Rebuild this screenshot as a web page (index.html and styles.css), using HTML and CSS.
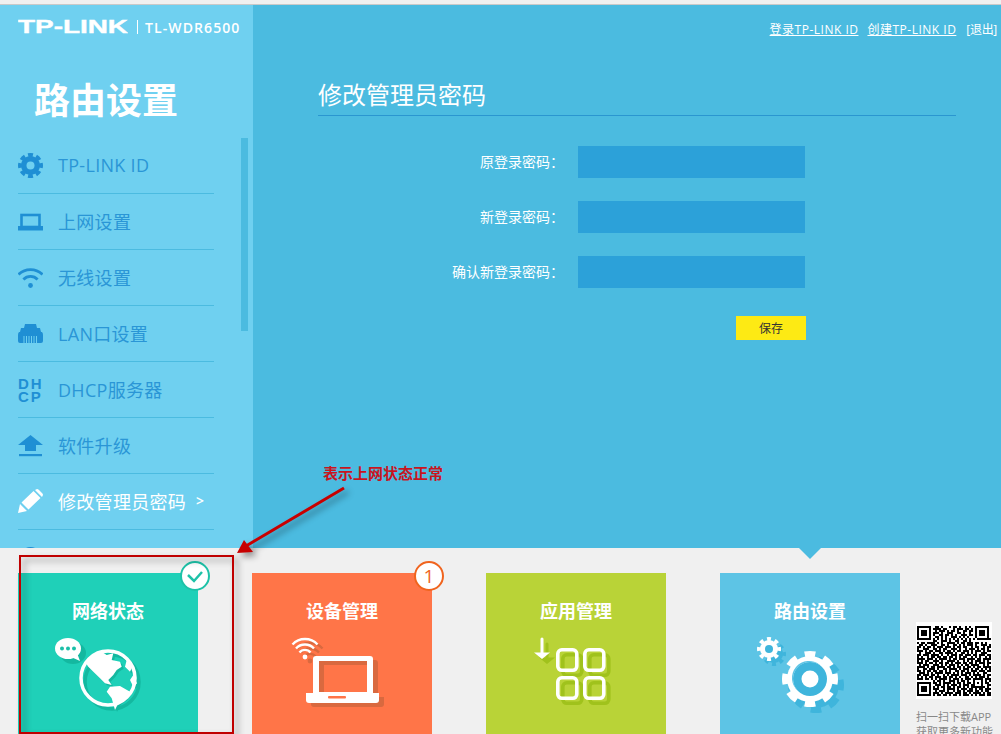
FILE: index.html
```html
<!DOCTYPE html>
<html lang="zh-CN">
<head>
    <meta charset="UTF-8">
    <meta name="viewport" content="width=device-width, initial-scale=1.0">
    <title>TL-WDR6500</title>
    <link rel="stylesheet" href="styles.css">
</head>
<body>
    <div class="app">
        <!-- Top Section -->
        <div class="top">
            <div class="sidebar">
                <div class="brand">
                    <svg class="brand-logo" width="110" height="20" viewBox="0 0 110 20"><text x="0" y="16" textLength="110" lengthAdjust="spacingAndGlyphs">TP-LINK</text></svg>
                    <span class="brand-sep"></span>
                    <span class="brand-model">TL-WDR6500</span>
                </div>
                <h1 class="side-title">路由设置</h1>
                <div class="scrollbar"></div>
                <ul class="nav">
                    <li class="nav-item">
                        <svg class="nav-icon" viewBox="0 0 25 25"><circle cx="12.5" cy="12.5" r="9.5" fill="#1f8fd4"/><circle cx="12.5" cy="12.5" r="10" fill="none" stroke="#1f8fd4" stroke-width="5" pathLength="80" stroke-dasharray="6 4" stroke-dashoffset="3"/><circle cx="12.5" cy="12.5" r="4" fill="#6fd0f0"/></svg>
                        <span>TP-LINK ID</span>
                    </li>
                    <li class="nav-item">
                        <svg class="nav-icon" viewBox="0 0 25 25"><rect x="3.5" y="6" width="18" height="12" fill="none" stroke="#1f8fd4" stroke-width="2.6"/><rect x="0" y="17" width="25" height="4.5" fill="#1f8fd4"/></svg>
                        <span>上网设置</span>
                    </li>
                    <li class="nav-item">
                        <svg class="nav-icon" viewBox="0 0 25 25"><path d="M.5 9.5a17 17 0 0 1 24 0M5.4 14.4a10 10 0 0 1 14.2 0" fill="none" stroke="#1f8fd4" stroke-width="2.8"/><circle cx="12.5" cy="20.5" r="2.4" fill="#1f8fd4"/></svg>
                        <span>无线设置</span>
                    </li>
                    <li class="nav-item">
                        <svg class="nav-icon" viewBox="0 0 25 25"><path d="M7 3h11l1 4h3l1 4h1q1 1 1 3v6q0 2-2 2H2q-2 0-2-2v-6q0-2 1-3h1l1-4h3z" fill="#1f8fd4"/><path d="M6 15v7M8.500 15v7M11 15v7M13.500 15v7M16 15v7M18.500 15v7" stroke="#6fd0f0" stroke-width="1"/></svg>
                        <span>LAN口设置</span>
                    </li>
                    <li class="nav-item">
                        <div class="nav-icon dhcp-icon">DH<br>CP</div>
                        <span>DHCP服务器</span>
                    </li>
                    <li class="nav-item">
                        <svg class="nav-icon" viewBox="0 0 25 25"><path d="M12.500 2 25 12h-7v6H7v-6H0z" fill="#1f8fd4"/><rect x="1" y="21" width="23" height="2.200" fill="#1f8fd4"/></svg>
                        <span>软件升级</span>
                    </li>
                    <li class="nav-item active">
                        <svg class="nav-icon" viewBox="0 0 25 25"><path d="M0 24l2-9 7 7zM3.500 13.500 15.500 2l7 7L10.500 20.500zM17 1l2-1q1 0 2 1l3 3q1 1 1 2l-1 2z" fill="#fff"/></svg>
                        <span>修改管理员密码</span>
                        <span class="nav-arrow">&gt;</span>
                    </li>
                    <li class="nav-item">
                        <svg class="nav-icon" viewBox="0 0 25 25"><circle cx="12.500" cy="12.500" r="9" fill="none" stroke="#1f8fd4" stroke-width="3"/></svg>
                    </li>
                </ul>
            </div>

            <div class="main">
                <div class="user-links">
                    <a>登录TP-LINK ID</a>
                    <a>创建TP-LINK ID</a>
                    <span>[退出]</span>
                </div>
                <h2 class="page-title">修改管理员密码</h2>
                <div class="form">
                    <div class="form-row"><label>原登录密码<span class="colon">：</span></label><div class="field"></div></div>
                    <div class="form-row"><label>新登录密码<span class="colon">：</span></label><div class="field"></div></div>
                    <div class="form-row"><label>确认新登录密码<span class="colon">：</span></label><div class="field"></div></div>
                </div>
                <button class="save-btn">保存</button>
            </div>
        </div>

        <!-- Bottom Section -->
        <div class="bottom">
            <div class="tile tile-green">
                <div class="badge badge-green">
                    <svg width="18" height="14" viewBox="0 0 18 14"><path d="M2 6l6 6 8-9" fill="none" stroke="#1ec2a8" stroke-width="2.500"/></svg>
                </div>
                <h3>网络状态</h3>
                <svg class="tile-icon" viewBox="0 0 180 110">
                    <defs>
                        <circle id="globe-ring" cx="90" cy="45" r="27" fill="none" stroke="currentColor" stroke-width="3.500"/>
                        <path id="globe-land" d="M67 28.700 73.700 22l8.300-4.300 6.700 4.300 6.600-1.700-1.600 6.700 8.300 1.700 1.700 5-5 3.300-3.400 5-5 5 3.400 5-6.700-1.700-5-5-6.700-6.600-5-5zM92 53.700l10-.7 10 5.700-5 6.600-6.700 5-3.300 6.700-3.300-11.700-5-6.600zM108.700 27l6.600 5-3.300 6.700-5-5zM115.300 42l3.700 8.300-3.700 3.400-3.300-6.700z" fill="currentColor"/>
                    </defs>
                    <ellipse cx="55" cy="20" rx="13" ry="11" fill="#14b8a0"/>
                    <use href="#globe-ring" x="4" y="4" class="shade-green"/>
                    <use href="#globe-land" x="2" y="2" class="shade-green"/>
                    <use href="#globe-ring" class="white"/>
                    <use href="#globe-land" class="white"/>
                    <ellipse cx="50" cy="15.500" rx="13" ry="10.500" fill="#fff"/>
                    <path d="M53 24l9 4-3-8z" fill="#fff"/>
                    <circle cx="44" cy="15.500" r="2" fill="#1bbfa8"/>
                    <circle cx="50" cy="15.500" r="2" fill="#1bbfa8"/>
                    <circle cx="56" cy="15.500" r="2" fill="#1bbfa8"/>
                </svg>
            </div>

            <div class="tile tile-orange">
                <div class="badge badge-orange">1</div>
                <h3>设备管理</h3>
                <svg class="tile-icon" viewBox="0 0 180 110">
                    <defs>
                        <g id="laptop">
                            <path d="M64 23h54q3 0 3 3v34h-60V26q0-3 3-3zm3 5v31h48V28z" fill="currentColor" fill-rule="evenodd"/>
                            <path d="M54 60h73v7q0 3-3 3H57q-3 0-3-3z" fill="currentColor"/>
                        </g>
                        <g id="wifi">
                            <path d="M40.500 11.500a17 17 0 0 1 25 0M44 15.500a12 12 0 0 1 18 0M47.500 19.500a7 7 0 0 1 11 0" fill="none" stroke="currentColor" stroke-width="2.400"/>
                            <circle cx="53" cy="24" r="2.400" fill="currentColor"/>
                        </g>
                    </defs>
                    <use href="#wifi" x="5" y="4" class="shade-orange"/>
                    <use href="#laptop" x="5" y="4" class="shade-orange"/>
                    <use href="#wifi" class="white"/>
                    <use href="#laptop" class="white"/>
                    <rect x="76" y="63" width="18" height="2.500" rx="1" fill="#ff7548"/>
                </svg>
            </div>

            <div class="tile tile-lime">
                <h3>应用管理</h3>
                <svg class="tile-icon" viewBox="0 0 180 110">
                    <defs>
                        <g id="apps">
                            <g fill="none" stroke="currentColor" stroke-width="3.600">
                                <rect x="71.800" y="16.800" width="19" height="20.500" rx="4"/>
                                <rect x="98.800" y="16.800" width="19" height="20.500" rx="4"/>
                                <rect x="71.800" y="44.800" width="19" height="20.500" rx="4"/>
                                <rect x="98.800" y="44.800" width="19" height="20.500" rx="4"/>
                            </g>
                            <path d="M54.500 6a1.500 1.500 0 0 1 3 0v13.500H64L56 26l-8-6.500h6.500z" fill="currentColor"/>
                        </g>
                    </defs>
                    <use href="#apps" x="5" y="5" class="shade-lime"/>
                    <use href="#apps" class="white"/>
                </svg>
            </div>

            <div class="tile tile-blue">
                <h3>路由设置</h3>
                <svg class="tile-icon" viewBox="0 0 180 110">
                    <defs>
                        <g id="gear-big">
                            <circle cx="90" cy="46" r="23" fill="currentColor"/>
                            <circle cx="90" cy="46" r="24.500" fill="none" stroke="currentColor" stroke-width="7" pathLength="80" stroke-dasharray="5.500 4.500" stroke-dashoffset="2.750"/>
                        </g>
                        <g id="gear-small">
                            <circle cx="49" cy="16" r="9" fill="currentColor"/>
                            <circle cx="49" cy="16" r="10" fill="none" stroke="currentColor" stroke-width="4" pathLength="80" stroke-dasharray="5 5" stroke-dashoffset="2.500"/>
                        </g>
                    </defs>
                    <use href="#gear-small" x="5" y="5" class="shade-blue"/>
                    <use href="#gear-big" x="6" y="6" class="shade-blue"/>
                    <use href="#gear-small" class="white"/>
                    <circle cx="49" cy="16" r="4" fill="#3fb5dc"/>
                    <use href="#gear-big" class="white"/>
                    <circle cx="90" cy="46" r="17" fill="#3fb5dc"/>
                    <path d="M90 29a17 17 0 0 0-12 29 17 17 0 0 1 22-26q-5-3-10-3z" fill="#5dc4e5"/>
                    <circle cx="90" cy="46" r="8.500" fill="#fff"/>
                </svg>
            </div>

            <div class="app-promo">
                <div class="qr"><svg id="qr-code" width="74" height="74" viewBox="0 0 37 37" shape-rendering="crispEdges"></svg></div>
                <p>扫一扫下载APP<br>获取更多新功能</p>
            </div>
        </div>

        <!-- Annotation -->
        <svg class="note-layer" width="1001" height="734" viewBox="0 0 1001 734">
            <g class="note-shadow">
                <rect x="20" y="556" width="213" height="177" fill="none" stroke="#c00000" stroke-width="2"/>
                <path d="M344 488 246 546" stroke="#c80000" stroke-width="3" fill="none"/>
                <path d="M237 553 244 540 253 552z" fill="#c80000"/>
            </g>
        </svg>
        <div class="note-text">表示上网状态正常</div>
    </div>
    <script src="qr.js"></script>
</body>
</html>
```

FILE: styles.css
```css
/* General Styling */
* {
    margin: 0;
    padding: 0;
    box-sizing: border-box;
    font-family: "Open Sans", "Noto Sans CJK SC", sans-serif;
}

html, body {
    height: 100%;
    overflow: hidden;
}

body {
    background-color: #f0f0f0;
}

.app {
    position: relative;
    height: 734px;
    padding-top: 4px;
    overflow: hidden;
}

.top {
    display: flex;
    height: 544px;
    border-top: 1px solid #c9c9c9;
}

/* Left Section */
.sidebar {
    position: relative;
    width: 253px;
    padding: 12px 0 0 18px;
    background-color: #6fd0f0;
    overflow: hidden;
}

.brand {
    display: flex;
    align-items: center;
    height: 20px;
    color: #fff;
}

.brand-logo text {
    font-family: "Liberation Sans", sans-serif;
    font-size: 18px;
    font-weight: 700;
    fill: #fff;
    stroke: #fff;
    stroke-width: 0.4;
}

.brand-sep {
    width: 1px;
    height: 14px;
    margin: 0 7px 0 9px;
    background-color: #fff;
}

.brand-model {
    font-size: 14px;
    font-weight: 600;
    letter-spacing: 1.1px;
    white-space: nowrap;
}

.side-title {
    height: 50px;
    margin-top: 39px;
    margin-bottom: -1px;
    padding-left: 16px;
    color: #fff;
    font-size: 36px;
    font-weight: 700;
    line-height: 50px;
}

.scrollbar {
    position: absolute;
    top: 133px;
    left: 241px;
    width: 7px;
    height: 193px;
    background-color: #4bbbe0;
}

.nav {
    width: 196px;
    margin-top: 13px;
    list-style: none;
}

.nav-item {
    display: flex;
    align-items: center;
    gap: 15px;
    height: 56px;
    border-bottom: 1px solid #4bbbe0;
    color: #2a96d6;
    font-size: 18px;
    letter-spacing: 0.3px;
    white-space: nowrap;
}

.nav-item span {
    margin-top: -2px;
}

.nav-item.active {
    color: #fff;
}

.nav-icon {
    flex: none;
    width: 25px;
    height: 25px;
}

.dhcp-icon {
    color: #1f8fd4;
    font-family: "Liberation Sans", sans-serif;
    font-size: 15px;
    font-weight: 700;
    letter-spacing: 2px;
    line-height: 13px;
}

.nav-item .nav-arrow {
    margin-left: -5px;
    font-size: 14px;
    font-weight: 600;
}

/* Right Section */
.main {
    flex: 1;
    padding: 15px 45px 0 65px;
    background-color: #4bbbe0;
    color: #fff;
}

.user-links {
    display: flex;
    justify-content: flex-end;
    gap: 9px;
    margin-right: -41px;
    font-size: 12px;
    line-height: 20px;
    white-space: nowrap;
}

.user-links a {
    letter-spacing: 0.5px;
    text-decoration: underline;
}

.user-links span {
    margin-left: 1px;
    letter-spacing: -0.3px;
}

.page-title {
    height: 41px;
    margin-top: 35px;
    border-bottom: 1px solid #2a96d0;
    font-size: 24px;
    font-weight: 400;
    line-height: 40px;
}

.form {
    display: flex;
    flex-direction: column;
    gap: 23px;
    margin-top: 30px;
}

.form-row {
    display: flex;
    align-items: center;
    gap: 14px;
}

.form-row label {
    width: 246px;
    padding-bottom: 3px;
    font-size: 14px;
    text-align: right;
}

/* TC font keeps the full-width colon centred in its box */
.colon {
    font-family: "Noto Sans CJK TC", sans-serif;
}

.field {
    width: 227px;
    height: 32px;
    background-color: #2ca1d9;
}

.save-btn {
    display: block;
    width: 70px;
    height: 24px;
    margin: 28px 0 0 418px;
    border: none;
    background-color: #fdea14;
    color: #333;
    font-size: 12px;
}

/* Bottom Section */
.bottom {
    display: flex;
    gap: 54px;
    height: 186px;
    padding: 25px 0 0 18px;
}

.tile {
    position: relative;
    flex: none;
    width: 180px;
    height: 186px;
    padding-top: 27px;
    color: #fff;
    text-align: center;
}

.tile h3 {
    font-size: 18px;
    font-weight: 700;
    line-height: 22px;
}

.tile-icon {
    display: block;
    width: 180px;
    height: 110px;
    margin-top: 11px;
    overflow: visible;
}

.tile-green { background-color: #1fd0b8; }
.tile-orange { background-color: #ff7548; }
.tile-lime { background-color: #b9d337; }
.tile-blue { background-color: #5dc4e5; }

/* little notch below the main panel */
.tile-blue::before {
    content: "";
    position: absolute;
    top: -25px;
    left: 79px;
    border-top: 11px solid #4bbbe0;
    border-left: 11px solid transparent;
    border-right: 11px solid transparent;
}

.white { color: #fff; }
.shade-green { color: #14b8a0; }
.shade-orange { color: #d9693f; }
.shade-lime { color: #a0c21c; }
.shade-blue { color: #3fb5dc; }

.badge {
    position: absolute;
    top: -12px;
    right: -12px;
    display: flex;
    align-items: center;
    justify-content: center;
    width: 30px;
    height: 30px;
    border-radius: 50%;
    background-color: #fff;
}

.badge-green {
    border: 2.5px solid #1ec2a8;
}

.badge-orange {
    border: 2.5px solid #f0641e;
    color: #f0641e;
    font-size: 19px;
}

.app-promo {
    flex: none;
    margin: 49px 0 0 -38px;
    width: 85px;
}

.qr {
    display: flex;
    align-items: center;
    justify-content: center;
    width: 76px;
    height: 77px;
    background-color: #fff;
}

.app-promo p {
    margin-top: 10px;
    color: #888;
    font-size: 11px;
    line-height: 15px;
    white-space: nowrap;
}

/* Annotation */
.note-layer {
    position: absolute;
    top: 0;
    left: 0;
    pointer-events: none;
}

.note-shadow {
    filter: drop-shadow(4px 4px 3px rgba(0, 0, 0, 0.4));
}

.note-text {
    position: absolute;
    top: 463px;
    left: 323px;
    color: #c8141e;
    font-size: 15px;
    font-weight: 700;
    line-height: 20px;
}
```

FILE: qr.js
```js
// QR pattern, one string per row
const rows = [
    "#######..##.#...#.##.#..#.#..#######",
    "#.....#.####.##...#.###.##.#.#.....#",
    "#.###.#..#.###.#.##.#..##.##.#.###.#",
    "#.###.#.###.#..###..##.#..#..#.###.#",
    "#.###.#.#..##.##.#.#..###.##.#.###.#",
    "#.....#..##.#.#..###.#.#.#...#.....#",
    "#######.#.#.#.#.#.#.#.#.#.#.#.#######",
    "........##..###.#..##..##.#..........",
    "#.##.####.#.#..####.#.##.###.##.#.#..",
    ".##.#..###..##.#..##.#.#.###.#..###.#",
    "##.#.##.#.###.###.#.##.##..#.##..#.##",
    "#..###..##.#.##..###.#..#.###.#.##.#.",
    "###.#.##.###.#.##.#.##.###.#.###.#.##",
    ".#..###.#..##.####.#..##.#.#.#..###..",
    "##.###.####.#..#.###.##.###.##.###.##",
    "#.#..#.##.##.##.##.#.#.##..#.#.#..#.#",
    "####.###.#.####.#.##.###.####.##.####",
    "#.#.##..###.#..####.#..#.#.#.###.#.#.",
    "###.#.##.#.##.##.#.###.##.##.#.###.##",
    ".#.###..###.#.#.###.#.#.##.####..#.#.",
    "####.#.##.####.##.#.##.#.##.#.##.####",
    "#..##.###.#..##.####.#.###.#.##.#.#.#",
    "##.#.##.##.##.#.#..##.##.#.###.###.##",
    ".###.#.#.####.###.#.#.#.###.#.#..##..",
    "##.###.##.#..#.#.####.###.#.####.#.##",
    "#.#.#.##.###.##.##.#.#..##.#.#.###.#.",
    "###.##.#.#.####.#.###.#.###.#####.###",
    "........#.##.#..###.#.##.#..#...#.#.#",
    "#######.##.#.####.#.##.#.##.#.#.#.##.",
    "#.....#..###.#.#.###.#.###.##...#..##",
    "#.###.#.#.#.##.##.#.##.#.#.#######.#.",
    "#.###.#.###..#.####.#.###.##.#.##.###",
    "#.###.#..#.###.#..#.##.#.###.##.#.##.",
    "#.....#.###.#.####.###.##.#.####.#.##",
    "#######.#.##.##.#.##.#.###.#.#.###.##"
];

const qr = document.getElementById("qr-code");
let cells = "";
rows.forEach((row, y) => {
    for (let x = 0; x < row.length; x++) {
        if (row[x] === "#") {
            cells += `<rect x="${x}" y="${y + 1}" width="1" height="1"/>`;
        }
    }
});
qr.innerHTML = cells;
```
